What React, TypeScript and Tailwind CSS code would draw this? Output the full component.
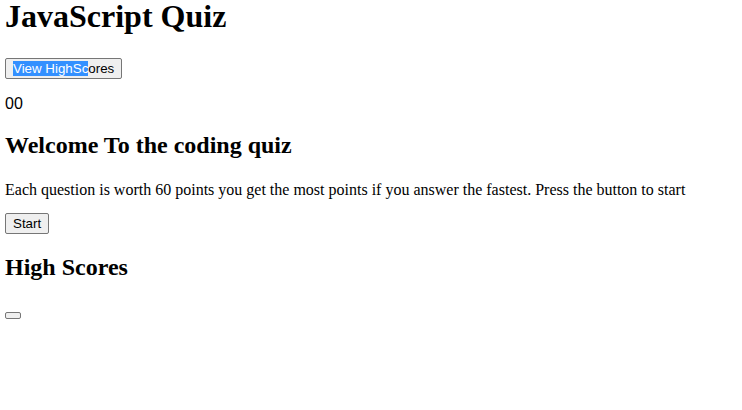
function QuizButton({ children, className = '' }: { children?: React.ReactNode; className?: string }) {
  return (
    <button
      className={`rounded-[2px] border border-[#767676] bg-[#efefef] px-[7px] font-['Liberation_Sans',Arial,sans-serif] text-[13.33px] leading-[15px] text-black ${className}`}
    >
      {children}
    </button>
  )
}

export default function App() {
  return (
    <div className="flex min-h-[410px] flex-col items-start bg-white px-[5px] font-['Liberation_Serif','Times_New_Roman',serif] text-black">
      <h1 className="text-[32px] font-bold leading-[33px]">JavaScript Quiz</h1>

      <QuizButton className="mt-[25px] h-[21px]">
        <span className="bg-[#3390ff] text-white">View HighSc</span>ores
      </QuizButton>

      <p className="mt-[16px] font-['Liberation_Sans',Arial,sans-serif] text-[16px] leading-[18px]">00</p>

      <h2 className="mt-[18px] text-[24px] font-bold leading-[28px]">Welcome To the coding quiz</h2>

      <p className="mt-[22px] text-[16px] leading-[18px]">
        Each question is worth 60 points you get the most points if you answer the fastest. Press the button to start
      </p>

      <QuizButton className="mt-[14px] h-[21px]">Start</QuizButton>

      <h2 className="mt-[19px] text-[24px] font-bold leading-[28px]">High Scores</h2>

      <QuizButton className="mt-[31px] h-[7px] w-[16px]" />
    </div>
  )
}
